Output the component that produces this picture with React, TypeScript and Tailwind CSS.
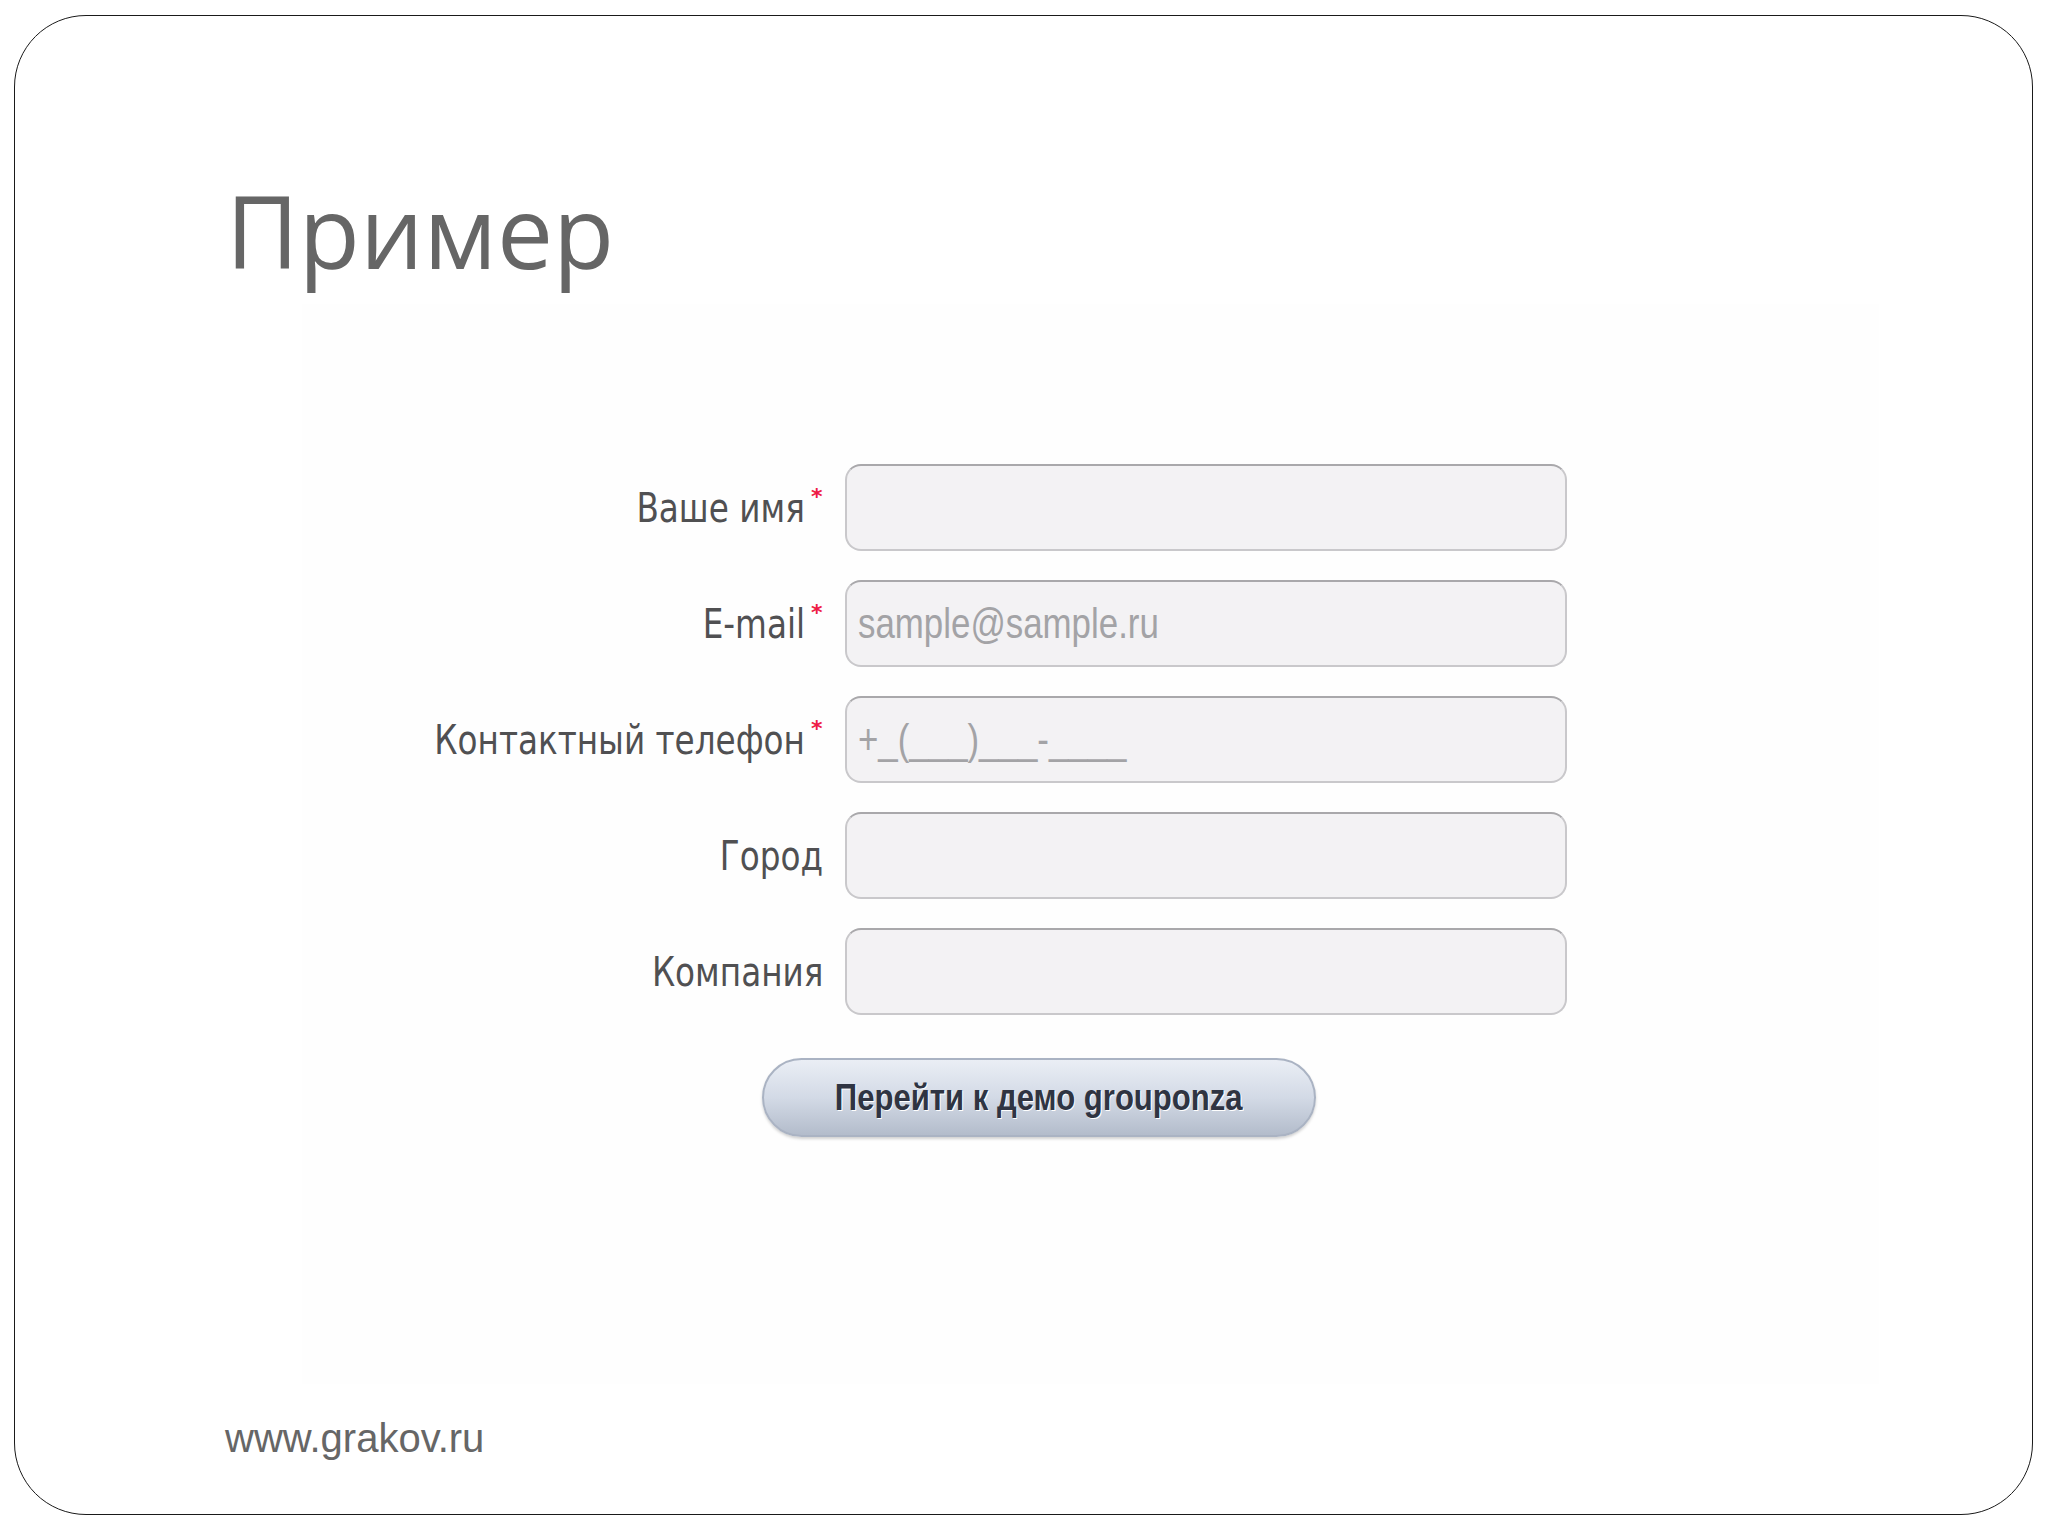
import React from 'react';

type Field = {
  label: string;
  required?: boolean;
  placeholder?: string;
};

const fields: Field[] = [
  { label: 'Ваше имя', required: true },
  { label: 'E-mail', required: true, placeholder: 'sample@sample.ru' },
  { label: 'Контактный телефон', required: true, placeholder: '+_(___)___-____' },
  { label: 'Город' },
  { label: 'Компания' },
];

function FormRow({ field }: { field: Field }) {
  return (
    <div className="flex h-[87px] items-center">
      <div className="flex w-[525px] items-center justify-end pr-[2px]">
        <span className="inline-block origin-right scale-x-[0.86] scale-y-[1.06] whitespace-nowrap font-['DejaVu_Sans',sans-serif] text-[38px] leading-none text-[#505052]">
          {field.label}
        </span>
        {field.required ? (
          <span className="ml-[6px] -mt-[22px] w-[14px] font-['DejaVu_Sans',sans-serif] text-[22px] font-bold leading-none text-[#ee1b45]">
            *
          </span>
        ) : (
          <span className="w-[2px]" />
        )}
      </div>
      <div className="ml-[18px] flex h-[87px] w-[722px] items-center rounded-[16px] border-2 border-[#c9c8cb] border-t-[#a9a8ab] bg-[#f3f2f4] pl-[11px]">
        {field.placeholder && (
          <span className="inline-block origin-left scale-x-[0.83] whitespace-nowrap font-['Liberation_Sans',Arial,sans-serif] text-[42px] leading-none text-[#a3a3a6]">
            {field.placeholder}
          </span>
        )}
      </div>
    </div>
  );
}

export default function App() {
  return (
    <div className="h-[1536px] w-[2048px] overflow-hidden bg-white pl-[14px] pt-[15px]">
      <div className="flex h-[1500px] w-[2019px] flex-col rounded-[72px] border-[1.5px] border-[#1a1a1a]">
        <h1 className="ml-[211px] mt-[164px] font-['Open_Sans',sans-serif] text-[100px] font-normal leading-none text-[#666666]">
          Пример
        </h1>

        <div className="ml-[287px] mt-[24px] flex w-[1577px] flex-col bg-[#fefefe] pb-[247px] pt-[160px]">
          <div className="flex flex-col gap-[29px]">
            {fields.map((f) => (
              <FormRow key={f.label} field={f} />
            ))}
          </div>
          <button className="ml-[460px] mt-[43px] flex h-[79px] w-[554px] items-center justify-center rounded-full border-2 border-[#aab3c3] bg-gradient-to-b from-[#eaeef5] via-[#d3dae6] to-[#b3bccb] shadow-[0_2px_3px_rgba(0,0,0,0.18)]">
            <span className="inline-block scale-x-[0.84] whitespace-nowrap font-['Liberation_Sans',Arial,sans-serif] text-[37px] font-bold leading-none text-[#2f3442] [text-shadow:1px_1px_0_#ffffff]">
              Перейти к демо grouponza
            </span>
          </button>
        </div>

        <div className="ml-[210px] mt-[34px] font-['Liberation_Sans',Arial,sans-serif] text-[40px] leading-none text-[#666666]">
          www.grakov.ru
        </div>
      </div>
    </div>
  );
}
